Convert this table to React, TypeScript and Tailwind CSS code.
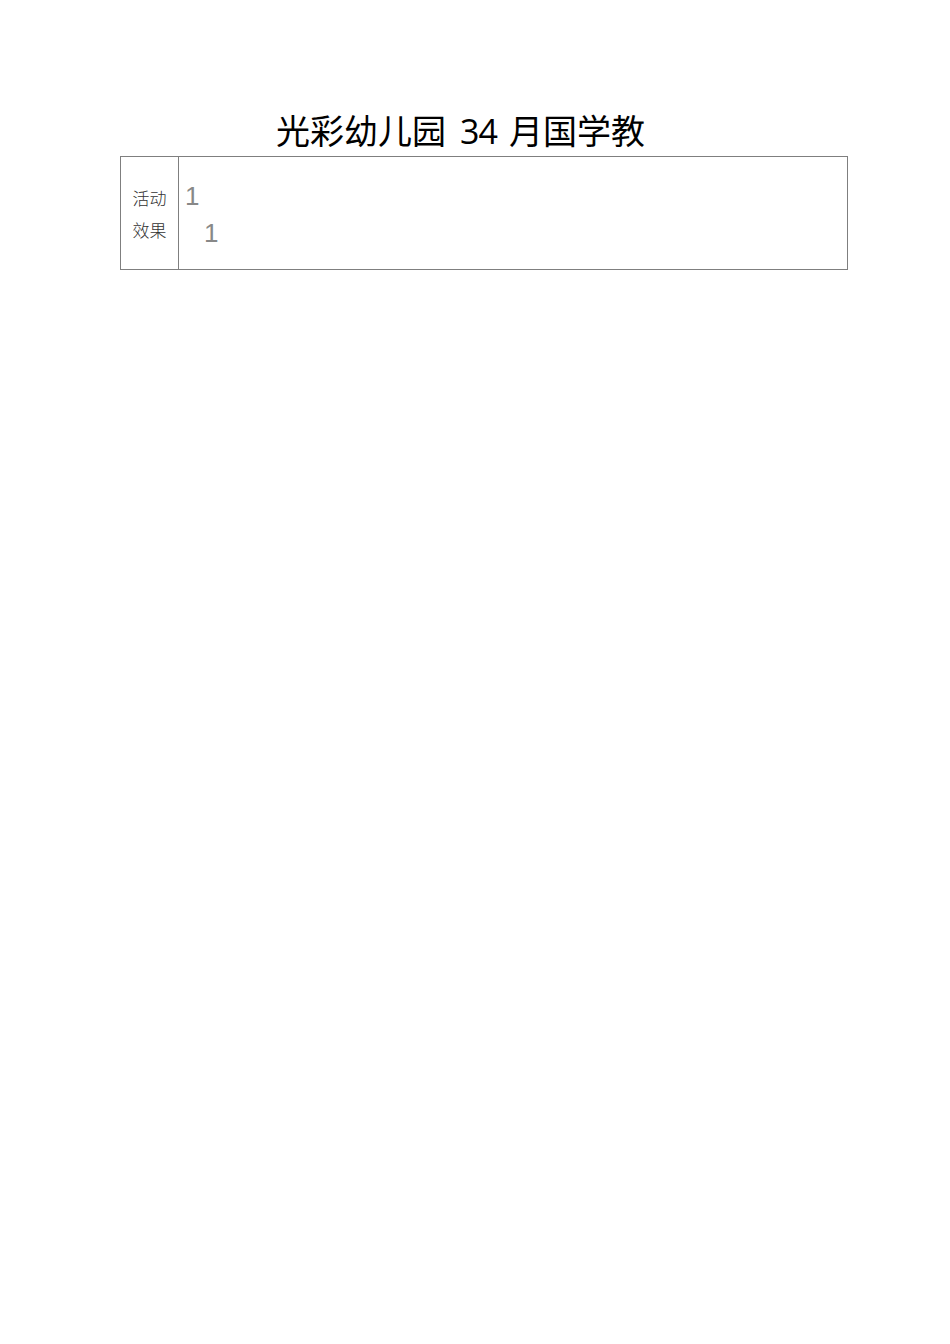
import React from "react";

export default function App() {
  return (
    <div className="w-[950px] h-[1344px] bg-white relative" style={{ fontFamily: '"Noto Sans CJK SC", "Noto Sans", sans-serif' }}>
      <div className="pt-[108px] pl-[276px] h-[156px] flex items-start">
        <div className="text-[34px] leading-[44px] text-black whitespace-nowrap flex items-baseline" style={{ fontFamily: '"Noto Sans CJK SC", sans-serif' }}>
          <span>光彩幼儿园</span>
          <span className="ml-[14px] tracking-[-1px]" style={{ fontFamily: '"Open Sans", "Noto Sans CJK SC", sans-serif' }}>34</span>
          <span className="ml-[12px]">月国学教</span>
        </div>
      </div>
      <div className="ml-[120px] w-[728px] h-[114px] border border-[#7f7f7f] flex">
        <div className="w-[58px] border-r border-[#7f7f7f] flex flex-col items-center justify-center pt-[2px] text-[17px] leading-[32px] text-[#333] font-light" style={{ fontFamily: '"Noto Sans CJK SC", serif' }}>
          <span>活动</span>
          <span>效果</span>
        </div>
        <div className="flex-1 pt-[21px] text-[26px] leading-[37px] text-[#888]" style={{ fontFamily: '"Liberation Sans", Arial, sans-serif' }}>
          <div className="pl-[6px]">1</div>
          <div className="pl-[25px]">1</div>
        </div>
      </div>
    </div>
  );
}
